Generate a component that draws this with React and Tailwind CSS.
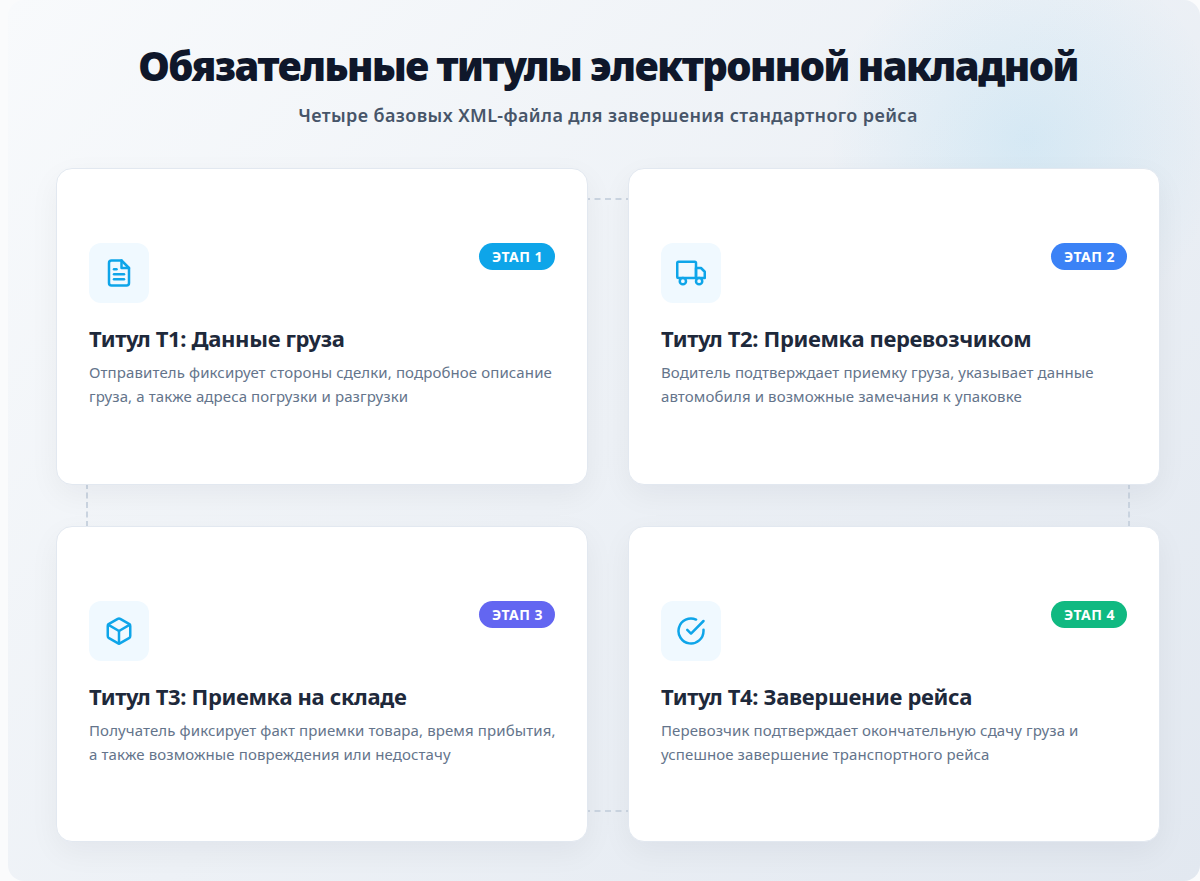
import React from 'react';

const cards = [
  { t: 'Титул Т1: Данные груза', d: ['Отправитель фиксирует стороны сделки, подробное описание', 'груза, а также адреса погрузки и разгрузки'], s: 'ЭТАП 1', c: 'bg-[#0ea5e9]', i: 'doc' },
  { t: 'Титул Т2: Приемка перевозчиком', d: ['Водитель подтверждает приемку груза, указывает данные', 'автомобиля и возможные замечания к упаковке'], s: 'ЭТАП 2', c: 'bg-[#3b82f6]', i: 'truck' },
  { t: 'Титул Т3: Приемка на складе', d: ['Получатель фиксирует факт приемки товара, время прибытия,', 'а также возможные повреждения или недостачу'], s: 'ЭТАП 3', c: 'bg-[#6366f1]', i: 'box' },
  { t: 'Титул Т4: Завершение рейса', d: ['Перевозчик подтверждает окончательную сдачу груза и', 'успешное завершение транспортного рейса'], s: 'ЭТАП 4', c: 'bg-[#10b981]', i: 'check' },
];

const icons = {
  doc: (<><path d="M14 2H6a2 2 0 0 0-2 2v16a2 2 0 0 0 2 2h12a2 2 0 0 0 2-2V8z" /><path d="M14 2v6h6" /><path d="M16 13H8" /><path d="M16 17H8" /><path d="M10 9H8" /></>),
  truck: (<><rect x="1" y="3" width="15" height="13" rx="1" /><path d="M16 8h4l3 3v5h-7V8z" /><circle cx="5.5" cy="18.5" r="2.5" fill="#f0f9ff" /><circle cx="18.5" cy="18.5" r="2.5" fill="#f0f9ff" /></>),
  box: (<><path d="M21 16V8a2 2 0 0 0-1-1.73l-7-4a2 2 0 0 0-2 0l-7 4A2 2 0 0 0 3 8v8a2 2 0 0 0 1 1.73l7 4a2 2 0 0 0 2 0l7-4A2 2 0 0 0 21 16z" /><path d="M3.27 6.96 12 12.01l8.73-5.05" /><path d="M12 22.08V12" /></>),
  check: (<><path d="M22 11.08V12a10 10 0 1 1-5.93-9.14" /><path d="M22 4 12 14.01l-3-3" /></>),
};

function Card({ card }) {
  return (
    <div className="relative z-10 flex flex-col justify-center rounded-2xl border border-[#e2e8f0] bg-white px-8 pb-px shadow-[0_10px_30px_rgba(15,23,42,0.05)]">
      <div className="mb-[21px] flex items-start justify-between">
        <div className="flex h-[60px] w-[60px] items-center justify-center rounded-xl bg-[#f0f9ff]">
          <svg width="30" height="30" viewBox="0 0 24 24" fill="none" stroke="#0ea5e9" strokeWidth="2" strokeLinecap="round" strokeLinejoin="round">
            {icons[card.i]}
          </svg>
        </div>
        <span className={`rounded-full py-[5px] pr-3 pl-[13px] text-[14px] leading-[17px] font-bold tracking-[0.5px] text-white ${card.c}`}>{card.s}</span>
      </div>
      <h3 className="mb-2 text-[22px] leading-7 font-bold tracking-[-0.35px] text-[#1e293b]">{card.t}</h3>
      <p className="text-[15px] leading-6 tracking-[0.11px] whitespace-nowrap text-[#64748b]">
        {card.d[0]}<br />{card.d[1]}
      </p>
    </div>
  );
}

export default function App() {
  return (
    <div className="h-[881px] w-[1200px] overflow-hidden bg-[#fafbfc] font-['Noto_Sans',sans-serif]">
      <div className="relative ml-2 flex h-[881px] flex-col overflow-hidden rounded-[16px] bg-[linear-gradient(135deg,#f8fafc_0%,#e2e8f0_100%)] pt-10 pr-10 pb-[39px] pl-12">
        <div className="absolute top-[-60px] right-[-27px] h-[400px] w-[400px] rounded-full bg-[radial-gradient(circle,rgba(14,165,233,0.1)_0%,rgba(14,165,233,0)_70%)]" />
        <div className="relative mb-[41px] text-center">
          <h1 className="text-[40px] leading-[52px] font-black tracking-[-1.55px] text-[#0f172a]">Обязательные титулы электронной накладной</h1>
          <p className="mt-[11px] text-[18px] leading-6 font-semibold tracking-[0.4px] text-[#475569]">Четыре базовых XML-файла для завершения стандартного рейса</p>
        </div>
        <div className="relative grid flex-1 grid-cols-[532px_532px] grid-rows-[316.5px_316.5px] gap-x-10 gap-y-[41px]">
          {cards.map((c) => <Card key={c.s} card={c} />)}
          <div className="absolute top-[30px] left-1/2 w-[48px] -translate-x-1/2 border-t-2 border-dashed border-[#cbd5e1]" />
          <div className="absolute bottom-[30px] left-1/2 w-[48px] -translate-x-1/2 border-t-2 border-dashed border-[#cbd5e1]" />
          <div className="absolute top-[315px] left-[30px] h-[44px] border-l-2 border-dashed border-[#cbd5e1]" />
          <div className="absolute top-[315px] right-[30px] h-[44px] border-l-2 border-dashed border-[#cbd5e1]" />
        </div>
      </div>
    </div>
  );
}
